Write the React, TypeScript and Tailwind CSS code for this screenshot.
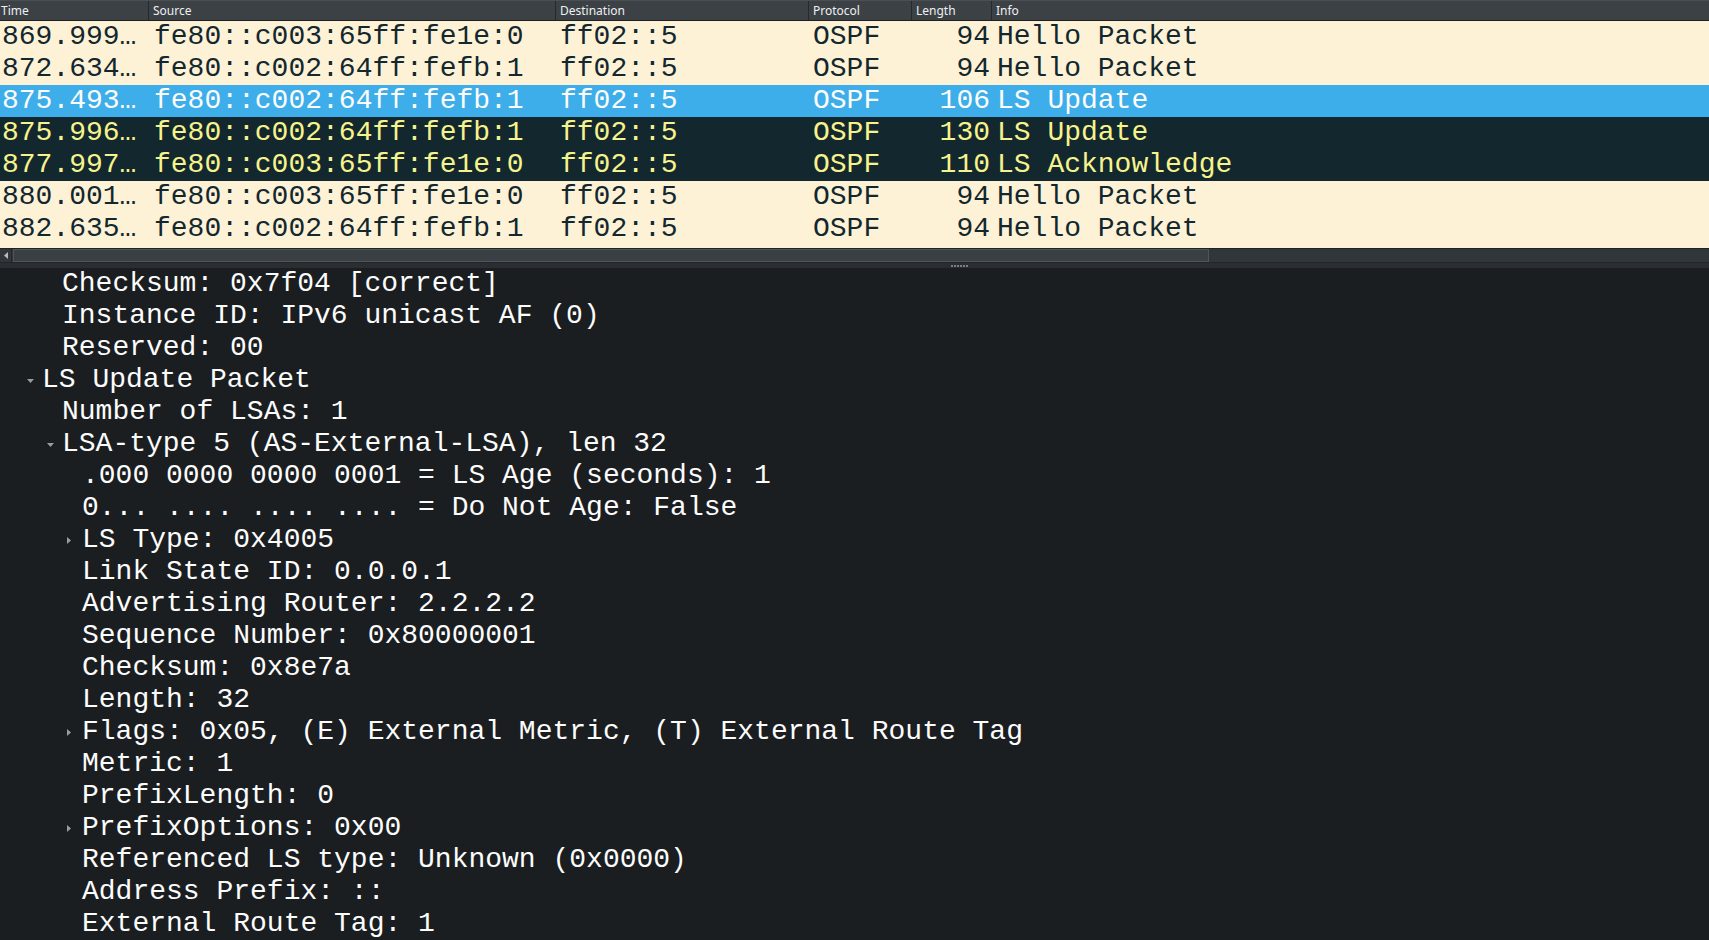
import React from 'react';

type Pkt = {
  time: string;
  src: string;
  dst: string;
  proto: string;
  len: number;
  info: string;
  kind: 'routing' | 'selected' | 'marked';
};

const packets: Pkt[] = [
  { time: '869.999…', src: 'fe80::c003:65ff:fe1e:0', dst: 'ff02::5', proto: 'OSPF', len: 94, info: 'Hello Packet', kind: 'routing' },
  { time: '872.634…', src: 'fe80::c002:64ff:fefb:1', dst: 'ff02::5', proto: 'OSPF', len: 94, info: 'Hello Packet', kind: 'routing' },
  { time: '875.493…', src: 'fe80::c002:64ff:fefb:1', dst: 'ff02::5', proto: 'OSPF', len: 106, info: 'LS Update', kind: 'selected' },
  { time: '875.996…', src: 'fe80::c002:64ff:fefb:1', dst: 'ff02::5', proto: 'OSPF', len: 130, info: 'LS Update', kind: 'marked' },
  { time: '877.997…', src: 'fe80::c003:65ff:fe1e:0', dst: 'ff02::5', proto: 'OSPF', len: 110, info: 'LS Acknowledge', kind: 'marked' },
  { time: '880.001…', src: 'fe80::c003:65ff:fe1e:0', dst: 'ff02::5', proto: 'OSPF', len: 94, info: 'Hello Packet', kind: 'routing' },
  { time: '882.635…', src: 'fe80::c002:64ff:fefb:1', dst: 'ff02::5', proto: 'OSPF', len: 94, info: 'Hello Packet', kind: 'routing' },
];

const rowColors = {
  routing: 'bg-[#fef2d6] text-[#12272e]',
  selected: 'bg-[#3daee9] text-[#fcfcfc]',
  marked: 'bg-[#12272e] text-[#f7f38c]',
};

type Node = { text: string; level: 0 | 1 | 2; arrow?: 'open' | 'closed' };

const tree: Node[] = [
  { text: 'Checksum: 0x7f04 [correct]', level: 1 },
  { text: 'Instance ID: IPv6 unicast AF (0)', level: 1 },
  { text: 'Reserved: 00', level: 1 },
  { text: 'LS Update Packet', level: 0, arrow: 'open' },
  { text: 'Number of LSAs: 1', level: 1 },
  { text: 'LSA-type 5 (AS-External-LSA), len 32', level: 1, arrow: 'open' },
  { text: '.000 0000 0000 0001 = LS Age (seconds): 1', level: 2 },
  { text: '0... .... .... .... = Do Not Age: False', level: 2 },
  { text: 'LS Type: 0x4005', level: 2, arrow: 'closed' },
  { text: 'Link State ID: 0.0.0.1', level: 2 },
  { text: 'Advertising Router: 2.2.2.2', level: 2 },
  { text: 'Sequence Number: 0x80000001', level: 2 },
  { text: 'Checksum: 0x8e7a', level: 2 },
  { text: 'Length: 32', level: 2 },
  { text: 'Flags: 0x05, (E) External Metric, (T) External Route Tag', level: 2, arrow: 'closed' },
  { text: 'Metric: 1', level: 2 },
  { text: 'PrefixLength: 0', level: 2 },
  { text: 'PrefixOptions: 0x00', level: 2, arrow: 'closed' },
  { text: 'Referenced LS type: Unknown (0x0000)', level: 2 },
  { text: 'Address Prefix: ::', level: 2 },
  { text: 'External Route Tag: 1', level: 2 },
];

const indent = { 0: 'pl-[22px]', 1: 'pl-[42px]', 2: 'pl-[62px]' };

const mono = { fontFamily: '"Liberation Mono", monospace' };

const Arrow = ({ kind }: { kind?: 'open' | 'closed' }) => (
  <span className="w-[20px] h-[32px] flex items-center shrink-0">
    {kind === 'open' && (
      <svg width="8" height="5" viewBox="0 0 8 5" className="ml-[5px] mt-[2px]">
        <path d="M0 0 L7 0 L3.5 4 Z" fill="#9a9c9e" />
      </svg>
    )}
    {kind === 'closed' && (
      <svg width="5" height="8" viewBox="0 0 5 8" className="ml-[5px] mt-[1px]">
        <path d="M0 0 L4 3.5 L0 7 Z" fill="#9a9c9e" />
      </svg>
    )}
  </span>
);

const HeaderCell = ({ label, w, last }: { label: string; w: string; last?: boolean }) => (
  <div className={`${w} h-full flex items-center pl-[4px] ${last ? 'flex-1' : 'shrink-0 border-r border-[#26292d]'}`}>
    {label}
  </div>
);

export default function App() {
  return (
    <div className="w-[1709px] h-[940px] overflow-hidden flex flex-col bg-[#1b1e20]">
      {/* packet list */}
      <div
        className="h-[21px] shrink-0 flex bg-[#3c4146] border-t border-[#4a4f54] border-b border-b-[#1e2124] text-[12px] text-[#eff0f1]"
        style={{ fontFamily: '"Noto Sans", sans-serif' }}
      >
        <div className="w-[149px] h-full flex items-center pl-[1px] shrink-0 border-r border-[#26292d]">Time</div>
        <HeaderCell label="Source" w="w-[407px]" />
        <HeaderCell label="Destination" w="w-[253px]" />
        <HeaderCell label="Protocol" w="w-[103px]" />
        <HeaderCell label="Length" w="w-[80px]" />
        <HeaderCell label="Info" w="" last />
      </div>
      <div className="h-[227px] shrink-0 bg-[#fef2d6] text-[28px] leading-[32px]" style={mono}>
        {packets.map((p, i) => (
          <div key={i} className={`h-[32px] flex whitespace-pre ${rowColors[p.kind]}`}>
            <div className="w-[149px] shrink-0 pl-[2px] overflow-hidden">{p.time}</div>
            <div className="w-[407px] shrink-0 pl-[5px]">{p.src}</div>
            <div className="w-[253px] shrink-0 pl-[4px]">{p.dst}</div>
            <div className="w-[103px] shrink-0 pl-[4px]">{p.proto}</div>
            <div className="w-[80px] shrink-0 pr-[2px] text-right">{p.len}</div>
            <div className="flex-1 pl-[5px]">{p.info}</div>
          </div>
        ))}
      </div>
      {/* horizontal scrollbar */}
      <div className="h-[15px] shrink-0 flex bg-[#31363b] border-t border-[#202326] border-b border-b-[#232629]">
        <div className="w-[12px] h-full flex items-center justify-center border-r border-[#25282b] shrink-0">
          <svg width="4" height="7" viewBox="0 0 4 7">
            <path d="M4 0 L0 3.5 L4 7 Z" fill="#b8babc" />
          </svg>
        </div>
        <div className="w-[1196px] h-full bg-[#3a3f44] border border-[#50555a] ml-[1px]" />
      </div>
      {/* splitter */}
      <div className="h-[5px] shrink-0 bg-[#2a2e32] flex items-center pl-[951px]">
        <div className="flex gap-[1px]">
          {[0, 1, 2, 3, 4, 5].map((d) => (
            <span key={d} className="w-[2px] h-[2px] bg-[#7a7e82]" />
          ))}
        </div>
      </div>
      {/* packet details */}
      <div className="flex-1 overflow-hidden text-[28px] leading-[32px] text-[#fcfcfc]" style={mono}>
        {tree.map((n, i) => (
          <div key={i} className={`h-[32px] flex items-center whitespace-pre ${indent[n.level]}`}>
            <Arrow kind={n.arrow} />
            <span>{n.text}</span>
          </div>
        ))}
      </div>
    </div>
  );
}
